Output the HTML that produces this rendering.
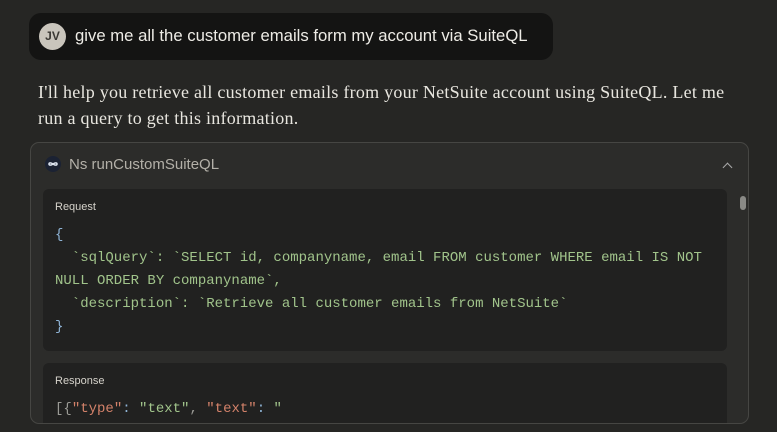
<!DOCTYPE html>
<html><head><style>
*{margin:0;padding:0;box-sizing:border-box}
body{width:777px;height:432px;background:#262624;overflow:hidden;position:relative;font-family:"Liberation Sans",sans-serif}
.bubble{position:absolute;left:29px;top:13px;width:524px;height:47px;background:#141413;border-radius:12px}
.av{position:absolute;left:10px;top:10px;width:27px;height:27px;border-radius:50%;background:#c9c5bc;color:#3a3833;font-size:12px;font-weight:bold;text-align:center;line-height:27px}
.ut{position:absolute;left:46px;top:13px;color:#eeece6;font-size:16.7px}
.resp{position:absolute;left:38px;top:79px;width:700px;color:#e8e6df;font-family:"Liberation Serif",serif;font-size:18px;line-height:26px;letter-spacing:0.25px}
.card{position:absolute;left:30px;top:142px;width:719px;height:282px;border:1px solid #464643;border-radius:9px;background:#2c2c2a;overflow:hidden}
.hd{position:absolute;left:14px;top:13px;color:#b3b0a8;font-size:15px}
.logo{display:inline-block;width:16px;height:16px;border-radius:50%;background:#1b2233;vertical-align:-3px;margin-right:8px;position:relative}
.chev{position:absolute;right:17px;top:21px;width:7px;height:7px;border-left:1.3px solid #aaa;border-top:1.3px solid #aaa;transform:rotate(45deg)}
.blk{position:absolute;left:12px;width:684px;background:#212120;border-radius:6px}
.lbl{position:absolute;left:12px;color:#d6d3cb;font-size:11px}
pre{position:absolute;left:12px;font-family:"Liberation Mono","DejaVu Sans Mono",monospace;font-size:14px;line-height:23px;color:#a1c48b}
.b{color:#8fb4d6}.r{color:#d4826a}.g{color:#9a9a95}
.sb{position:absolute;left:709px;top:53px;width:6px;height:14px;border-radius:3px;background:#8a8a86}
</style></head><body>
<div class="bubble"><div class="av">JV</div><div class="ut">give me all the customer emails form my account via SuiteQL</div></div>
<div class="resp">I'll help you retrieve all customer emails from your NetSuite account using SuiteQL. Let me<br>run a query to get this information.</div>
<div class="card">
<div class="hd"><span class="logo"><svg width="16" height="16" viewBox="0 0 16 16"><path d="M4 8c0-1.5 2-1.5 4 0s4 1.5 4 0-2-1.5-4 0-4 1.5-4 0z" fill="none" stroke="#dfe6f2" stroke-width="1.5"/></svg></span>Ns runCustomSuiteQL</div>
<div class="chev"></div>
<div class="blk" style="top:46px;height:162px">
<div class="lbl" style="top:12px">Request</div>
<pre style="top:35px"><span class="b">{</span>
  `sqlQuery`: `SELECT id, companyname, email FROM customer WHERE email IS NOT
NULL ORDER BY companyname`,
  `description`: `Retrieve all customer emails from NetSuite`
<span class="b">}</span></pre>
</div>
<div class="blk" style="top:220px;height:80px">
<div class="lbl" style="top:12px">Response</div>
<pre style="top:35px"><span class="g">[{</span><span class="r">"type"</span><span class="b">:</span> "text"<span class="g">,</span> <span class="r">"text"</span><span class="b">:</span> "</pre>
</div>
<div class="sb"></div>
</div>
</body></html>
